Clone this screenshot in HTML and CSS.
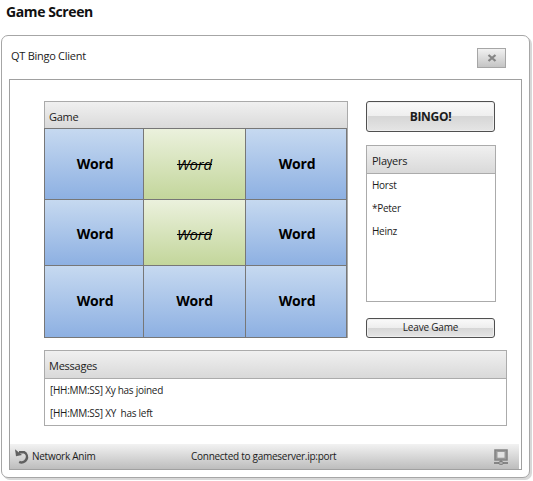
FILE: index.html
```html
<!DOCTYPE html>
<html lang="en">
<head>
<meta charset="utf-8">
<title>Game Screen</title>
<link rel="stylesheet" href="styles.css">
</head>
<body>
<h1>Game Screen</h1>
<div class="window">
  <header class="titlebar">
    <span class="title">QT Bingo Client</span>
    <button class="close" aria-label="Close"><svg width="10" height="8" viewBox="0 0 10 8"><path d="M1.5 1 8.5 7M8.5 1 1.5 7" stroke="#858585" stroke-width="2.3"/></svg></button>
  </header>
  <main class="panel">
    <div class="content">
      <div class="top">
        <section class="game">
          <h2>Game</h2>
          <div class="board">
            <div class="cell"><span>Word</span></div><div class="cell hit"><span>Word</span></div><div class="cell"><span>Word</span></div>
            <div class="cell middle"><span>Word</span></div><div class="cell hit middle"><span>Word</span></div><div class="cell middle"><span>Word</span></div>
            <div class="cell"><span>Word</span></div><div class="cell center"><span>Word</span></div><div class="cell"><span>Word</span></div>
          </div>
        </section>
        <aside class="side">
          <button class="btn bingo"><span>BINGO!</span></button>
          <section class="box players">
            <h2>Players</h2>
            <ul><li>Horst</li><li>*Peter</li><li>Heinz</li></ul>
          </section>
          <button class="btn leave"><span>Leave Game</span></button>
        </aside>
      </div>
      <section class="box messages">
        <h2>Messages</h2>
        <ul><li>[HH:MM:SS] Xy has joined</li><li>[HH:MM:SS] XY&nbsp; has left</li></ul>
      </section>
    </div>
    <footer class="status">
      <svg class="network" width="16" height="16" viewBox="0 0 16 16"><path d="M4 3.2H9A5.3 5.3 0 1 1 4.2 12.8" fill="none" stroke="#606060" stroke-width="2.5"/><path d="M0 .3 1 7.2 7 6Z" fill="#606060"/></svg>
      <span class="anim">Network Anim</span>
      <span class="connected">Connected to gameserver.ip:port</span>
      <svg class="computer" width="14" height="16" viewBox="0 0 14 16"><path d="M1 1H13V11H1Z" fill="#999" stroke="#858585" stroke-width="1.6"/><path d="M3.5 3H10.5V8.7H3.5Z" fill="#e2e2e2"/><path d="M7 11V13M0 14H14" stroke="#858585" stroke-width="1.8"/><ellipse cx="7" cy="14" rx="2.5" ry="1.4" fill="#bbb" stroke="#777"/></svg>
    </footer>
  </main>
</div>
</body>
</html>
```
FILE: styles.css
```css
* { box-sizing: border-box; }
body { margin: 0; width: 533px; height: 481px; overflow: hidden; background: #fff; color: #1c1c1c; font: 11px/14px "Open Sans", "Noto Sans", sans-serif; letter-spacing: -0.27px; }
h1 { margin: 0; height: 35px; padding: 3px 0 0 6px; font-size: 14px; line-height: 18px; font-weight: 700; letter-spacing: -0.4px; color: #111; }
h2 { margin: 0; font-size: 11px; line-height: 14px; font-weight: 400; letter-spacing: -0.25px; }
ul { margin: 0; padding: 0; list-style: none; }
button { padding: 0; font: inherit; letter-spacing: inherit; color: inherit; }
.window { margin-left: 1px; width: 529px; height: 443px; border: 1px solid #a6a6a6; border-radius: 7px; background: #fff; box-shadow: 2px 2px 0 #d8d8d8; padding: 0 7px; }
.titlebar { height: 43px; display: flex; justify-content: space-between; padding: 12px 16px 0 2px; }
.title { padding-top: 1px; }
.close { width: 29px; height: 20px; border: 1px solid #a6a6a6; background: linear-gradient(#f1f1f1, #c4c4c4); display: flex; align-items: center; justify-content: center; }
.panel { width: 513px; height: 391px; border: 1px solid #a0a0a0; }
.content { height: 364px; padding: 21px 0 0 34px; }
.top { display: flex; gap: 18px; height: 249px; }
.game { width: 304px; height: 237px; border: 1px solid #aaa; border-bottom: 0; background: linear-gradient(#f0f0f0, #d9d9d9 27px, #ddd 27px); }
.game h2 { height: 26px; padding: 8px 0 0 4px; }
.board { width: 303px; height: 210px; margin-left: -1px; padding: 1px; display: grid; gap: 1px; grid-template: 70px 65px 71px / 98px 101px 100px; background: #777; }
.cell { display: flex; align-items: center; justify-content: center; padding: 0 0 1px 2px; background: linear-gradient(#c6d9f0, #8db0e2); color: #000; font-weight: 700; font-size: 14px; line-height: 18px; letter-spacing: -0.2px; }
.middle { padding: 2px 0 0 2px; }
.center { padding-left: 0; }
.hit { background: linear-gradient(#ebf1dd, #c3d69b); font-weight: 400; font-style: italic; font-size: 15px; text-decoration: line-through; padding-left: 0; }
.side { width: 130px; }
.btn { display: block; width: 129px; border: 1px solid #505050; border-radius: 3px; background: linear-gradient(#fafafa, #eee 49%, #d6d6d6 50%, #e5e5e5); box-shadow: inset 0 0 0 1px #eee; }
.bingo { height: 31px; font-size: 12px; font-weight: 700; letter-spacing: -0.3px; }
.leave { height: 20px; margin-top: 16px; font-size: 10px; letter-spacing: -0.2px; line-height: 16px; }
.leave span { position: relative; top: -1px; }
.box { border: 1px solid #ababab; background: #fff; }
.box h2 { height: 28px; padding: 8px 0 0 5px; border-bottom: 1px solid #ababab; background: linear-gradient(#f0f0f0, #d9d9d9); }
.messages h2 { padding-left: 4px; }
.players { height: 157px; margin-top: 13px; }
.box ul { font-size: 10px; line-height: 23px; padding-left: 5px; }
.messages { width: 463px; height: 76px; }
.status { height: 25px; width: 509px; display: flex; align-items: center; background: linear-gradient(#f2f2f2, #bdbdbd); padding-left: 5px; font-size: 10px; }
.status span { padding-bottom: 2px; }
.status .anim { width: 160px; padding-left: 1px; }
.status .connected { width: 303px; }
.network, .computer { flex: none; }
```
